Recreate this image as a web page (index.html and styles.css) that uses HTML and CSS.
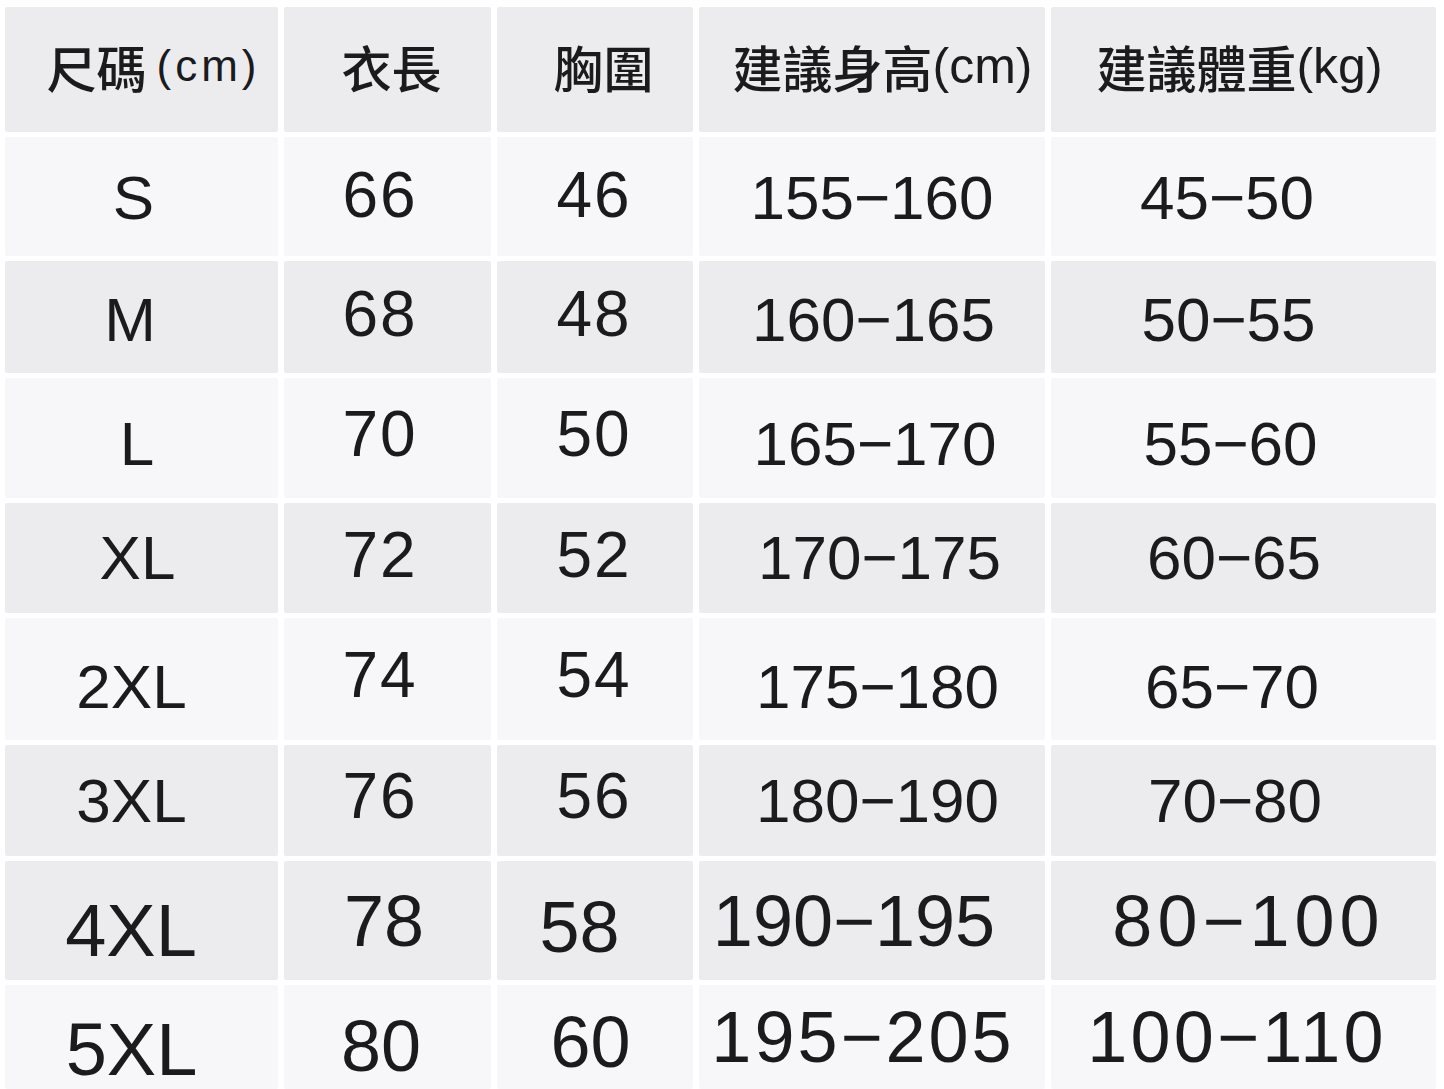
FILE: index.html
```html
<!DOCTYPE html>
<html lang="zh-Hant">
<head>
<meta charset="utf-8">
<title>尺碼表</title>
<link rel="stylesheet" href="styles.css">
</head>
<body>
<div class="chart">
  <div class="row head gray">
    <div class="cell c1"><span class="cjk">尺碼</span><span class="unit">(cm)</span></div>
    <div class="cell c2"><span class="cjk">衣長</span></div>
    <div class="cell c3"><span class="cjk">胸圍</span></div>
    <div class="cell c4"><span class="cjk">建議身高</span><span class="unit2">(cm)</span></div>
    <div class="cell c5"><span class="cjk">建議體重</span><span class="unit2">(kg)</span></div>
  </div>
  <div class="row r-s light">
    <div class="cell c1">S</div>
    <div class="cell c2">66</div>
    <div class="cell c3">46</div>
    <div class="cell c4">155−160</div>
    <div class="cell c5">45−50</div>
  </div>
  <div class="row r-m gray">
    <div class="cell c1">M</div>
    <div class="cell c2">68</div>
    <div class="cell c3">48</div>
    <div class="cell c4">160−165</div>
    <div class="cell c5">50−55</div>
  </div>
  <div class="row r-l light">
    <div class="cell c1">L</div>
    <div class="cell c2">70</div>
    <div class="cell c3">50</div>
    <div class="cell c4">165−170</div>
    <div class="cell c5">55−60</div>
  </div>
  <div class="row r-xl gray">
    <div class="cell c1">XL</div>
    <div class="cell c2">72</div>
    <div class="cell c3">52</div>
    <div class="cell c4">170−175</div>
    <div class="cell c5">60−65</div>
  </div>
  <div class="row r-2xl light">
    <div class="cell c1">2XL</div>
    <div class="cell c2">74</div>
    <div class="cell c3">54</div>
    <div class="cell c4">175−180</div>
    <div class="cell c5">65−70</div>
  </div>
  <div class="row r-3xl gray">
    <div class="cell c1">3XL</div>
    <div class="cell c2">76</div>
    <div class="cell c3">56</div>
    <div class="cell c4">180−190</div>
    <div class="cell c5">70−80</div>
  </div>
  <div class="row r-4xl gray">
    <div class="cell c1">4XL</div>
    <div class="cell c2">78</div>
    <div class="cell c3">58</div>
    <div class="cell c4">190−195</div>
    <div class="cell c5">80−100</div>
  </div>
  <div class="row r-5xl light">
    <div class="cell c1">5XL</div>
    <div class="cell c2">80</div>
    <div class="cell c3">60</div>
    <div class="cell c4">195−205</div>
    <div class="cell c5">100−110</div>
  </div>
</div>
</body>
</html>
```
FILE: styles.css
```css
html, body {
  margin: 0;
  padding: 0;
  background: #ffffff;
}

body {
  font-family: "Liberation Sans", Arial, "Noto Sans CJK TC", sans-serif;
  color: #1b1b1d;
  overflow: hidden;
}

.chart {
  display: grid;
  grid-template-columns: 273px 207px 196px 346px 385px;
  grid-template-rows: 125px 119px 112px 120px 110px 122px 111px 119px 104px;
  column-gap: 6px;
  row-gap: 5px;
  padding: 7px 0 0 5px;
}

.row {
  display: contents;
}

.cell {
  display: flex;
  align-items: center;
  justify-content: center;
  box-sizing: border-box;
  border-radius: 2px;
  font-size: 62px;
  line-height: 1;
  white-space: nowrap;
}

.gray .cell {
  background: #ececef;
}

.light .cell {
  background: #f7f7f9;
}

/* column defaults */
.c2, .c3 {
  font-size: 64px;
  letter-spacing: 2px;
}

.c1 { padding-right: 20px; }
.c2 { padding-right: 15px; }
.c3 { padding-right: 2px; }

/* header */
.head .cell {
  font-size: 50px;
  letter-spacing: 0;
  padding: 0 0 8px 0;
}

.cjk {
  font-family: "Noto Sans CJK TC", sans-serif;
  font-weight: 500;
}

.unit {
  font-size: 44px;
  letter-spacing: 4px;
  margin-left: 10px;
}

.unit2 {
  font-size: 50px;
}

.head .c1 { padding-left: 24px; }
.head .c2 { padding-left: 8px; }
.head .c3 { padding-left: 17px; }
.head .c4 { padding-left: 21px; }
.head .c5 { padding-right: 8px; }

/* horizontal nudges per row */
.r-s .c1 { padding-right: 16px; }
.r-m .c1 { padding-right: 23px; }
.r-l .c1 { padding-right: 9px; }
.r-xl .c1 { padding-right: 8px; }

.r-m .c4 { padding-left: 3px; }
.r-l .c4 { padding-left: 6px; }
.r-xl .c4 { padding-left: 15px; }
.r-2xl .c4 { padding-left: 11px; }
.r-3xl .c4 { padding-left: 11px; }

.r-s .c5 { padding-right: 33px; }
.r-m .c5 { padding-right: 30px; }
.r-l .c5 { padding-right: 26px; }
.r-xl .c5 { padding-right: 19px; }
.r-2xl .c5 { padding-right: 23px; }
.r-3xl .c5 { padding-right: 17px; }

/* vertical nudges per row */
.r-s .c1, .r-s .c4, .r-s .c5 { padding-top: 2px; }
.r-s .c2, .r-s .c3 { padding-bottom: 3px; }

.r-m .c1, .r-m .c4, .r-m .c5 { padding-top: 6px; }
.r-m .c2, .r-m .c3 { padding-bottom: 6px; }

.r-l .c1, .r-l .c4, .r-l .c5 { padding-top: 12px; }
.r-l .c2, .r-l .c3 { padding-bottom: 8px; }

.r-xl .c2, .r-xl .c3 { padding-bottom: 6px; }

.r-2xl .c1, .r-2xl .c4, .r-2xl .c5 { padding-top: 16px; }
.r-2xl .c2, .r-2xl .c3 { padding-bottom: 8px; }

.r-3xl .c2, .r-3xl .c3 { padding-bottom: 9px; }

/* larger last rows */
.r-4xl .cell, .r-5xl .cell {
  font-size: 72px;
  letter-spacing: 0;
}

.r-4xl .c1, .r-5xl .c1 {
  font-size: 74px;
}

.r-4xl .c1 { padding-right: 21px; padding-top: 21px; }
.r-4xl .c2 { padding-right: 7px; }
.r-4xl .c3 { padding-right: 31px; padding-top: 13px; }
.r-4xl .c4 { padding-right: 36px; }
.r-4xl .c5 { padding-left: 10px; letter-spacing: 5px; }

.r-5xl .c1 { padding-right: 20px; padding-top: 26px; }
.r-5xl .c2 { padding-right: 13px; padding-top: 18px; }
.r-5xl .c3 { padding-right: 9px; padding-top: 10px; }
.r-5xl .c4 { padding-right: 18px; letter-spacing: 3px; }
.r-5xl .c5 { padding-right: 13px; letter-spacing: 3.2px; }
```
